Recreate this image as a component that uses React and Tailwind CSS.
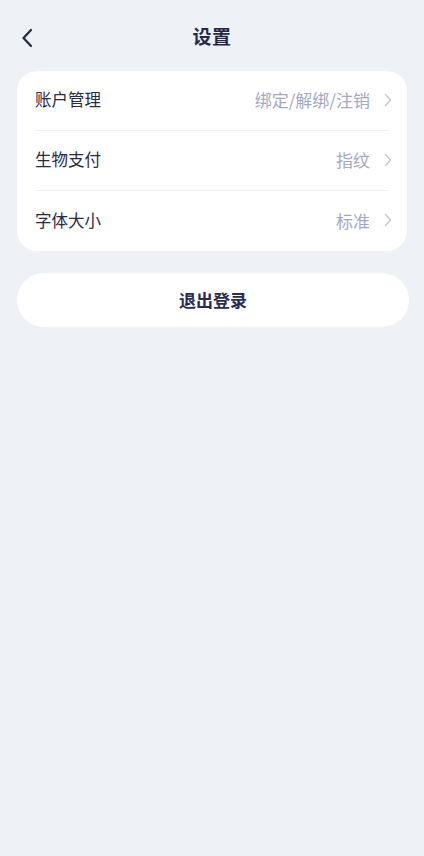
import React from 'react';

const rows = [
    { label: '账户管理', value: '绑定/解绑/注销' },
    { label: '生物支付', value: '指纹' },
    { label: '字体大小', value: '标准' },
];

const Chevron = () => (
    <svg width="8" height="14" viewBox="0 0 8 14" fill="none" className="ml-[14px] mr-[-3px]">
        <path d="M1.5 1.5L6.5 7L1.5 12.5" stroke="#c3c7d4" strokeWidth="1.4" strokeLinecap="round" strokeLinejoin="round" />
    </svg>
);

const App = () => {
    return (
        <div
            className="min-h-[856px] w-full bg-[#eef1f6] text-[#2a2b45]"
            style={{ fontFamily: '"Noto Sans CJK SC", "Noto Sans", sans-serif' }}
        >
            {/* header */}
            <div className="relative flex h-[74px] items-center justify-center pb-[3px]">
                <button className="absolute left-[19px] top-[26px] p-[2px]">
                    <svg width="12" height="20" viewBox="0 0 12 20" fill="none">
                        <path d="M10 2L2.5 10L10 18" stroke="#26284a" strokeWidth="2.2" strokeLinecap="round" strokeLinejoin="round" />
                    </svg>
                </button>
                <h1 className="text-[19px] font-bold leading-none tracking-[0.5px] text-[#26284a]">设置</h1>
            </div>

            {/* settings card */}
            <div className="mx-[17px] mt-[-3px] rounded-[20px] bg-white px-[18px]">
                {rows.map((row, i) => (
                    <div
                        key={row.label}
                        className={`flex h-[60px] items-center justify-between pb-[2px] ${i < rows.length - 1 ? 'border-b border-[#f1f2f6]' : ''}`}
                    >
                        <span className="text-[16.5px] leading-none text-[#2a2b45]">{row.label}</span>
                        <div className="flex items-center">
                            <span className="text-[17px] leading-none text-[#a3a9c2]">{row.value}</span>
                            <Chevron />
                        </div>
                    </div>
                ))}
            </div>

            {/* logout */}
            <button className="mx-[17px] mt-[22px] flex h-[54px] w-[392px] items-center justify-center rounded-full bg-white pb-[2px]">
                <span className="text-[17px] font-bold leading-none text-[#2a2b50]">退出登录</span>
            </button>
        </div>
    );
};

export default App;
